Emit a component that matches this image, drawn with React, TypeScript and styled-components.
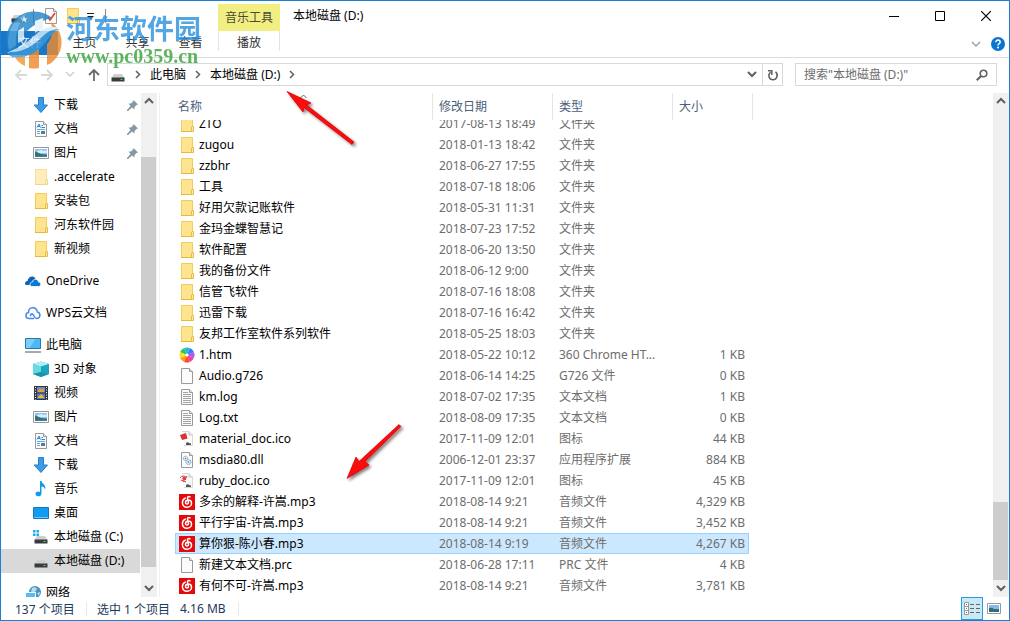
import React from "react";
import styled, { createGlobalStyle } from "styled-components";

const Global = createGlobalStyle`
  *, *::before, *::after { box-sizing: border-box; }
  html, body { margin: 0; padding: 0; background: #fff; }
  body, button, input, table {
    font-family: "Noto Sans", "Noto Sans CJK SC", sans-serif;
    font-size: 12px;
  }
  button { margin: 0; padding: 0; border: 0; background: none; color: inherit; }
  svg { display: block; flex: none; }
`;

/* ---------- layout ---------- */

const Window = styled.div`
  position: relative;
  display: flex;
  flex-direction: column;
  height: 100vh;
  border: 1px solid #1a80d2;
  background: #fff;
  color: #000;
  overflow: hidden;
`;

const Ribbon = styled.header`
  display: grid;
  grid-template-columns: 217px 62px 1fr auto;
  grid-template-rows: 30px 26px;
  flex: none;
  border-bottom: 1px solid #dadbdc;
`;

const QuickBar = styled.div`
  display: flex;
  align-items: center;
  padding-left: 9px;
`;

const QuickButton = styled.button<{ $w: number }>`
  display: flex;
  justify-content: center;
  width: ${(p) => p.$w}px;
`;

const Rule = styled.span<{ $color?: string; $h?: number }>`
  width: 1px;
  height: ${(p) => p.$h ?? 14}px;
  background: ${(p) => p.$color ?? "#8a8a8a"};
`;

const ToolLabel = styled.div`
  margin-top: 3px;
  background: #f1ee82;
  color: #4b4a2e;
  line-height: 27px;
  text-align: center;
`;

const WindowTitle = styled.h1`
  margin: 0;
  padding-left: 13px;
  font-size: 12px;
  font-weight: 400;
  line-height: 29px;
`;

const WindowButtons = styled.div`
  display: flex;
`;

const CaptionButton = styled.button`
  display: flex;
  align-items: center;
  justify-content: center;
  width: 46px;
`;

const Tabs = styled.nav`
  display: flex;
  align-items: flex-start;
`;

const Tab = styled.button<{ $file?: boolean }>`
  width: ${(p) => (p.$file ? 57 : 53)}px;
  height: 24px;
  background: ${(p) => (p.$file ? "#1a76c6" : "transparent")};
  color: ${(p) => (p.$file ? "#fff" : "#333")};
  line-height: 24px;
`;

const ToolTab = styled.button`
  height: 20px;
  border-left: 1px solid #e2e2e2;
  border-right: 1px solid #e2e2e2;
  color: #333;
  line-height: 24px;
`;

const RibbonEnd = styled.div`
  display: flex;
  grid-column: 4;
  align-items: center;
  justify-content: flex-end;
  gap: 10px;
  padding-right: 4px;
`;

const AddressRow = styled.div`
  display: flex;
  flex: none;
  align-items: flex-start;
  height: 35px;
  padding: 5px 12px 0 0;
`;

const HistoryButtons = styled.div`
  display: flex;
  align-items: center;
  justify-content: space-between;
  width: 106px;
  height: 23px;
  padding: 0 6px 0 13px;
`;

const AddressBox = styled.div`
  display: flex;
  flex: 1;
  align-items: center;
  height: 23px;
  padding-left: 2px;
  border: 1px solid #d9d9d9;
`;

const Crumb = styled.button`
  line-height: 21px;
  white-space: nowrap;
`;

const CrumbArrow = styled.span`
  display: flex;
  justify-content: center;
  width: 24px;
`;

const Spacer = styled.span`
  flex: 1;
`;

const BoxButton = styled.button<{ $ruled?: boolean }>`
  display: flex;
  align-items: center;
  justify-content: center;
  width: 20px;
  height: 21px;
  border-left: ${(p) => (p.$ruled ? "1px solid #d9d9d9" : "0")};
`;

const SearchBox = styled.label`
  display: flex;
  align-items: center;
  width: 202px;
  height: 23px;
  margin-left: 12px;
  padding: 0 8px;
  border: 1px solid #d9d9d9;
`;

const SearchInput = styled.input`
  flex: 1;
  min-width: 0;
  padding: 0;
  border: 0;
  outline: 0;
  background: transparent;
  &::placeholder { color: #6d6d6d; opacity: 1; }
`;

const Body = styled.div`
  display: flex;
  flex: 1;
  min-height: 0;
`;

const NavPane = styled.nav`
  width: 140px;
  flex: none;
  overflow: hidden;
`;

const NavList = styled.ul`
  margin: 0 1px 8px 0;
  padding: 0;
  list-style: none;
`;

const NavItem = styled.button<{ $root?: boolean; $on?: boolean }>`
  display: flex;
  align-items: center;
  gap: 5px;
  width: 100%;
  height: 24px;
  padding-left: ${(p) => (p.$root ? 24 : 32)}px;
  background: ${(p) => (p.$on ? "#d9d9d9" : "transparent")};
  line-height: 24px;
  text-align: left;
  white-space: nowrap;
`;

const PinSlot = styled.span`
  margin-left: auto;
  padding-right: 2px;
`;

const Scrollbar = styled.div<{ $before: number; $thumb: number; $after: number }>`
  display: grid;
  grid-template-rows:
    17px minmax(0, ${(p) => p.$before}fr) minmax(0, ${(p) => p.$thumb}fr)
    minmax(0, ${(p) => p.$after}fr) 17px;
  flex: none;
  width: 16px;
  background: #f0f0f0;
`;

const ScrollButton = styled.button`
  display: flex;
  align-items: center;
  justify-content: center;
  width: 15px;
`;

const Thumb = styled.div`
  grid-row: 3;
  width: 15px;
  background: #cdcdcd;
`;

const ScrollEnd = styled(ScrollButton)`
  grid-row: 5;
`;

const FilePane = styled.main`
  display: flex;
  flex: 1;
  min-width: 0;
  margin-left: 2px;
  padding-left: 15px;
  border-left: 1px solid #efefef;
`;

const FileTable = styled.table`
  display: flex;
  flex: 1;
  flex-direction: column;
  min-width: 0;
`;

const columns = "258px 120px 120px";

const Head = styled.thead`
  display: block;
  flex: none;
`;

const HeadRow = styled.tr`
  display: grid;
  grid-template-columns: ${columns} 80px;
`;

const HeadCell = styled.th<{ $first?: boolean }>`
  display: flex;
  position: relative;
  height: 27px;
  padding: 0 0 0 ${(p) => (p.$first ? 3 : 6)}px;
  border-right: 1px solid #e5e5e5;
  color: #4c607a;
  font-weight: 400;
  line-height: 27px;
`;

const SortMark = styled.span`
  position: absolute;
  top: 1px;
  left: 0;
  right: 0;
  display: flex;
  justify-content: center;
`;

const Rows = styled.tbody`
  display: block;
  flex: 1;
  min-height: 0;
  overflow: hidden;
`;

const Row = styled.tr<{ $on?: boolean }>`
  display: grid;
  grid-template-columns: ${columns} 76px;
  width: max-content;
  height: 21px;
  background: ${(p) => (p.$on ? "#cce8ff" : "transparent")};
  box-shadow: ${(p) => (p.$on ? "inset 0 0 0 1px #99d1ff" : "none")};
  line-height: 21px;
  &:first-child { margin-top: -7px; }
`;

const NameCell = styled.td`
  display: flex;
  align-items: center;
  gap: 4px;
  padding: 0 0 0 4px;
  white-space: nowrap;
`;

const InfoCell = styled.td<{ $right?: boolean }>`
  padding: ${(p) => (p.$right ? "0 4px 0 0" : "0 0 0 6px")};
  color: #6d6d6d;
  text-align: ${(p) => (p.$right ? "right" : "left")};
  white-space: nowrap;
`;

const StatusBar = styled.footer`
  display: flex;
  flex: none;
  align-items: center;
  height: 23px;
  padding: 0 4px 0 14px;
  color: #1e395b;
`;

const StatusText = styled.span<{ $w: number; $indent?: boolean }>`
  width: ${(p) => p.$w}px;
  padding-left: ${(p) => (p.$indent ? 10 : 0)}px;
  white-space: nowrap;
`;

const ViewButton = styled.button<{ $on?: boolean }>`
  display: flex;
  align-items: center;
  justify-content: center;
  width: 22px;
  height: 23px;
  border: ${(p) => (p.$on ? "1px solid #26a0da" : "0")};
  background: ${(p) => (p.$on ? "#cbe8f6" : "transparent")};
`;

/* ---------- overlays ---------- */

const Watermark = styled.div`
  position: absolute;
  top: 9px;
  left: 3px;
  display: flex;
  gap: 2px;
  opacity: 0.82;
  pointer-events: none;
`;

const WatermarkText = styled.div`
  display: flex;
  flex-direction: column;
  padding-top: 4px;
`;

const WatermarkName = styled.strong`
  color: #2f93de;
  font-size: 27px;
  font-weight: 700;
  line-height: 30px;
  white-space: nowrap;
`;

const WatermarkUrl = styled.strong`
  color: #3ca53c;
  font-family: "Liberation Serif", serif;
  font-size: 20px;
  font-weight: 700;
  line-height: 24px;
`;

const Arrows = styled.svg`
  position: absolute;
  top: -1px;
  left: -1px;
  pointer-events: none;
`;

/* ---------- icons ---------- */

const Chevron = ({ d, color = "#606060", w = 2 }: { d: "up" | "down" | "right"; color?: string; w?: number }) => {
  const path = { up: "M1 7l4-4 4 4", down: "M1 3l4 4 4-4", right: "M3 2l3.5 3.5L3 9" }[d];
  return (
    <svg width="10" height="11" viewBox="0 0 10 11" fill="none" stroke={color} strokeWidth={w}>
      <path d={path} />
    </svg>
  );
};

const FolderIcon = ({ pale }: { pale?: boolean }) => (
  <svg width="16" height="16" viewBox="0 0 16 16" opacity={pale ? 0.6 : 1}>
    <path d="M2.500 .5h11v10.500l-.5 4.500H2.500z" fill="#ffe48f" stroke="#f0cc58" />
    <path d="M2 15.500h12" stroke="#e5b93d" />
    <path d="M12.500 15.500v-4.500l.5-.5h1.500v5z" fill="#ffe9a2" stroke="#e8bd43" />
  </svg>
);

const Page = ({ children }: { children?: React.ReactNode }) => (
  <svg width="16" height="16" viewBox="0 0 16 16">
    <path d="M2.500 .5h8l3 3v12h-11z" fill="#fbfbfb" stroke="#9a9a9a" />
    <path d="M10.500 .5v3h3" fill="#e8e8e8" stroke="#9a9a9a" />
    {children}
  </svg>
);

const LinesIcon = () => (
  <Page>
    <path d="M4 3.500h5M4 5.500h8M4 7.500h8M4 9.500h8M4 11.500h8M4 13.500h8" stroke="#a3a3a3" />
  </Page>
);

const GearIcon = () => (
  <Page>
    <circle cx="6.500" cy="6.500" r="2.200" fill="#dceaf4" stroke="#8e9eab" strokeDasharray="1.500 .6" />
    <circle cx="9.500" cy="10" r="2.500" fill="#d2e7f5" stroke="#76a6c9" strokeDasharray="1.500 .6" />
    <circle cx="6.500" cy="6.500" r=".7" fill="#778" />
    <circle cx="9.500" cy="10" r=".8" fill="#4b88b8" />
  </Page>
);

const RedDocIcon = ({ ruby }: { ruby?: boolean }) => (
  <svg width="16" height="16" viewBox="0 0 16 16">
    <path d="M3 .5h7l3.500 3.500v10.500H5" fill="#fbfbfb" stroke="#d9d9d9" />
    <path d="M10 .5v3.500h3.500" fill="#eee" stroke="#c2c2c2" />
    <path d="M7 12l2-1 1 1 2 .5V14H7z" fill="#555" />
    {ruby ? (
      <g fill="none" stroke="#e0383c">
        <path d="M1 5q3-4 7 0M2 7l5 2M3 3l4 4M8 3L4 9" />
        <circle cx="5" cy="5.500" r="1.200" fill="#e0383c" />
      </g>
    ) : (
      <path d="M1 4l6-2 1.500 5.500L3 9z" fill="#dc3037" />
    )}
  </svg>
);

const WheelIcon = () => {
  const order = ["#a45cf2", "#3f78f2", "#22b8e0", "#2fc64e", "#f4e626", "#ff9d22", "#f94c34", "#f23f9c"];
  const start = [5, 6, 7, 0, 1, 2, 3, 4].map((n) => order[(n + 3) % 8]);
  const pt = (a: number) => `${8 + 7.5 * Math.cos(a)} ${8 + 7.5 * Math.sin(a)}`;
  return (
    <svg width="16" height="16" viewBox="0 0 16 16">
      {start.map((c, i) => {
        const a = (-i * Math.PI) / 4 - 0.4;
        return <path key={i} fill={c} d={`M8 8L${pt(a)}A7.500 7.500 0 0 1 ${pt(a + Math.PI / 4)}z`} />;
      })}
      <circle cx="8" cy="8" r="1.500" fill="#fff" />
    </svg>
  );
};

const MusicAppIcon = () => (
  <svg width="16" height="16" viewBox="0 0 16 16">
    <path d="M0 0h16v16H0z" fill="#e20a0a" />
    <path
      d="M11 2.900C9.800 2 8.300 2.600 8.500 4l.9 4c.3 1.300-.5 2-1.400 2s-1.600-.8-1.500-1.800C6.700 6.700 8 6 9.300 6c2 0 3.200 1.300 3.200 3.200 0 2.300-1.900 4-4.500 4-2.700 0-4.600-2-4.600-4.700 0-2 1.100-3.600 2.900-4.400"
      fill="none"
      stroke="#fff"
      strokeWidth="1.500"
      strokeLinecap="round"
    />
  </svg>
);

const DownIcon = () => (
  <svg width="16" height="16" viewBox="0 0 16 16">
    <path d="M5.500 .5h5V8h4L8 15.500 1 8h4.500z" fill="#3c9be8" stroke="#2a80ca" />
  </svg>
);

const DocIcon = () => (
  <Page>
    <path d="M4 6.500L6 3l1.500 3.500M5 5.500h2M8.500 4.500h1.500M8.500 6.500h3.500" stroke="#2887d0" fill="none" />
    <path d="M4 8.500h8M4 10.500h3M4 12.500h3" stroke="#64a7da" />
    <path d="M8 10h4v3H8z" fill="#4d7f98" />
  </Page>
);

const PictureIcon = () => (
  <svg width="16" height="16" viewBox="0 0 16 16">
    <path d="M.5 2.500h15v11H.5z" fill="#fff" stroke="#999" />
    <path d="M2 4h12v8H2z" fill="#8dc4f2" />
    <path d="M5 6q3-2 5 0 2-1 4 0v2H2z" fill="#d8effb" />
    <path d="M2 6.500q3 .5 6 2.500l6 .5V12H2z" fill="#38736d" />
    <path d="M2 11h12v1H2z" fill="#3d7eb8" />
  </svg>
);

const PinIcon = () => (
  <svg width="11" height="11" viewBox="0 0 11 11">
    <path d="M6.500 0L11 4.500l-1.500.5-2 2 0 2.500L5 7.500 1 11H0v-1l3.500-4L1.500 3.500 4 3.500l2-2z" fill="#8497a6" />
  </svg>
);

const OneDriveIcon = () => (
  <svg width="16" height="16" viewBox="0 0 16 16">
    <path d="M0 10.500C0 9 1 8 2.500 8 3 4 8 1.500 10.500 5.500L5 12H2C1 12 0 11.500 0 10.500z" fill="#0a63b5" />
    <path d="M5 11.500c0-1.500 1-2.500 2.500-2.500C8 5.500 12.500 5 13.500 9c3 0 3 4.500 0 4.500H7c-1.200 0-2-1-2-2z" fill="#0a78d6" stroke="#fff" strokeWidth=".8" />
  </svg>
);

const WpsIcon = () => (
  <svg width="16" height="16" viewBox="0 0 16 16" fill="none" stroke="#4c86ef" strokeWidth="1.500">
    <path d="M9 13.500H4C0 13.500 0 8 3.500 7.500 3.500 1.500 11.500 1 12.300 7c3.700.8 3.500 6.500-.8 6.500C9.500 13.500 9.500 11 8 9.500 6.500 8 4.500 10 6 11" />
  </svg>
);

const ComputerIcon = () => (
  <svg width="16" height="16" viewBox="0 0 16 16">
    <path d="M.5 1.500h15v10H.5z" fill="#4db8f6" stroke="#32779f" />
    <path d="M1 2h9L5 11H1z" fill="#7bcdfb" />
    <path d="M0 15h16" stroke="#7d929f" strokeWidth="1.500" />
  </svg>
);

const CubeIcon = () => (
  <svg width="16" height="16" viewBox="0 0 16 16">
    <path d="M0 3l8-2.500L16 3v10l-8 3-8-3z" fill="#2cb9cf" />
    <path d="M0 3l8-2.500L16 3l-8 2.500z" fill="#b4eef3" />
    <path d="M0 3l8 2.500V11L0 13z" fill="#69d8e3" />
    <path d="M8 5.500L16 3v10l-8-2z" fill="#19a6bf" />
    <path d="M0 13l8-2 8 2-8 3z" fill="#1794ad" />
  </svg>
);

const VideoIcon = () => (
  <svg width="16" height="16" viewBox="0 0 16 16">
    <path d="M1 1h14v14H1z" fill="#33353b" />
    <path d="M4 2h8v5.500H4z" fill="#6988cf" />
    <path d="M4 8.500h8V14H4z" fill="#4e79cf" />
    <path d="M5 6l2-3 2 2 2-2v4H5z" fill="#e2a52c" />
    <path d="M5 12l3-3 3 3v1H5z" fill="#e7b932" />
    <path d="M2.500 2v13M13.500 2v13" stroke="#fff" strokeDasharray="1 1.500" />
  </svg>
);

const MusicIcon = () => (
  <svg width="16" height="16" viewBox="0 0 16 16">
    <path d="M7 0h1.500c.5 3 5 3.500 3.500 8.500-.5-2-1.500-3-3.500-3V12.500C8.500 16.500 2 16 2.500 12.700 3 10.500 5.500 10 7 11z" fill="#119bea" />
  </svg>
);

const DesktopIcon = () => (
  <svg width="16" height="16" viewBox="0 0 16 16">
    <path d="M.5 2.500h15v11H.5z" fill="#109cf2" stroke="#1378b8" />
    <path d="M1 12.500h14" stroke="#6ec6fa" />
  </svg>
);

const DriveIcon = ({ win }: { win?: boolean }) => (
  <svg width="16" height="16" viewBox="0 0 16 16">
    {win && <path d="M0 1h2.500v2.500H0zM3.500 1H6v2.500H3.500zM0 4.500h2.500V7H0zM3.500 4.500H6V7H3.500z" fill="#1ba9f0" />}
    <path d="M4 7h8l2.500 4h-13z" fill="#cfcfcf" />
    <path d="M1.500 10.500h13v4h-13z" fill="#373b3e" />
    <path d="M10.500 12.500h2" stroke="#4fe04f" />
  </svg>
);

const NetworkIcon = () => (
  <svg width="16" height="16" viewBox="0 0 16 16">
    <circle cx="10" cy="7" r="6" fill="#4a93c2" />
    <path d="M7 3q4-2 5 1l-2 3-4 0zM12 8l3-1-1 4z" fill="#b6dbea" />
    <path d="M.5 7.500h10v6H.5z" fill="#55bdf5" stroke="#fff" />
    <path d="M2 15h8" stroke="#789" />
  </svg>
);

const DetailsIcon = () => (
  <svg width="16" height="14" viewBox="0 0 16 14">
    <path d="M.5 .5h4v4h-4zM.5 4.500h4v4h-4zM.5 8.500h4v4h-4z" fill="#fff" stroke="#999" />
    <path d="M6 2.500h4M12 2.500h4M6 6.500h4M12 6.500h4M6 10.500h4M12 10.500h4" stroke="#666" />
    <path d="M2 2h1v1H2z" fill="#566" />
    <path d="M2 6h1v1H2z" fill="#28a0e0" />
    <path d="M2 10h1v1H2z" fill="#d13c20" />
  </svg>
);

const NavArrow = ({ d, color }: { d: string; color: string }) => (
  <svg width="14" height="14" viewBox="0 0 14 14" fill="none" stroke={color} strokeWidth="1.800">
    <path d={d} />
  </svg>
);

const SiteLogo = () => (
  <svg width="60" height="59" viewBox="0 0 60 59">
    <path d="M9 48C-3 33 2 11 20 3.500 31-1 43 3 48 8 30 12 12 26 9 48z" fill="#2484c8" />
    <path d="M5 40C1 24 9 9 22 4c-7 9-11 19-10 31z" fill="#4ba3db" />
    <path d="M47 12c12 8 14 26 5 36-3 4-6 6-9 7V34c5-5 6-12 4-22z" fill="#ee8a30" />
    <path d="M9 43c5-1 8-3 12-5v18C16 54 11 49 9 43z" fill="#f29638" />
    <path d="M25 58V38l10-7v27q-5 1-10 0z" fill="#f08a2c" />
    <path d="M3 43c16 3 29-5 38-14 6-6 10-8 16-9-3-3-7-4-12-3-11 2-18 14-28 19-5 3-9 4-14 7z" fill="#d6edfb" />
    <path d="M5 42c14 1 25-7 33-15 6-6 11-8 17-8-7 4-10 9-14 14-9 11-22 17-35 13z" fill="#3b9ad8" />
    <path d="M14 33V21l6-4v13zM31 23V11l8-3v10z" fill="#e3f2fc" />
    <path d="M20 6l1 2.500h2.500L21.500 10l1 2.500-2.500-1.500-2.500 1.500 1-2.500-2-1.500H19z" fill="#f2faff" />
  </svg>
);

/* ---------- data ---------- */

type NavEntry = [string, React.ReactNode];

const quickAccess: NavEntry[] = [
  ["下载", <DownIcon />],
  ["文档", <DocIcon />],
  ["图片", <PictureIcon />],
  [".accelerate", <FolderIcon pale />],
  ["安装包", <FolderIcon />],
  ["河东软件园", <FolderIcon />],
  ["新视频", <FolderIcon />],
];

const thisPc: NavEntry[] = [
  ["3D 对象", <CubeIcon />],
  ["视频", <VideoIcon />],
  ["图片", <PictureIcon />],
  ["文档", <DocIcon />],
  ["下载", <DownIcon />],
  ["音乐", <MusicIcon />],
  ["桌面", <DesktopIcon />],
  ["本地磁盘 (C:)", <DriveIcon win />],
  ["本地磁盘 (D:)", <DriveIcon />],
];

const icons = {
  folder: <FolderIcon />,
  web: <WheelIcon />,
  blank: <Page />,
  text: <LinesIcon />,
  material: <RedDocIcon />,
  dll: <GearIcon />,
  ruby: <RedDocIcon ruby />,
  mp3: <MusicAppIcon />,
};

const files: [keyof typeof icons, string, string, string, string][] = [
  ["folder", "ZTO", "2017-08-13 18:49", "文件夹", ""],
  ["folder", "zugou", "2018-01-13 18:42", "文件夹", ""],
  ["folder", "zzbhr", "2018-06-27 17:55", "文件夹", ""],
  ["folder", "工具", "2018-07-18 18:06", "文件夹", ""],
  ["folder", "好用欠款记账软件", "2018-05-31 11:31", "文件夹", ""],
  ["folder", "金玛金蝶智慧记", "2018-07-23 17:52", "文件夹", ""],
  ["folder", "软件配置", "2018-06-20 13:50", "文件夹", ""],
  ["folder", "我的备份文件", "2018-06-12 9:00", "文件夹", ""],
  ["folder", "信管飞软件", "2018-07-16 18:08", "文件夹", ""],
  ["folder", "迅雷下载", "2018-07-16 16:42", "文件夹", ""],
  ["folder", "友邦工作室软件系列软件", "2018-05-25 18:03", "文件夹", ""],
  ["web", "1.htm", "2018-05-22 10:12", "360 Chrome HT...", "1 KB"],
  ["blank", "Audio.g726", "2018-06-14 14:25", "G726 文件", "0 KB"],
  ["text", "km.log", "2018-07-02 17:35", "文本文档", "1 KB"],
  ["text", "Log.txt", "2018-08-09 17:35", "文本文档", "0 KB"],
  ["material", "material_doc.ico", "2017-11-09 12:01", "图标", "44 KB"],
  ["dll", "msdia80.dll", "2006-12-01 23:37", "应用程序扩展", "884 KB"],
  ["ruby", "ruby_doc.ico", "2017-11-09 12:01", "图标", "45 KB"],
  ["mp3", "多余的解释-许嵩.mp3", "2018-08-14 9:21", "音频文件", "4,329 KB"],
  ["mp3", "平行宇宙-许嵩.mp3", "2018-08-14 9:21", "音频文件", "3,452 KB"],
  ["mp3", "算你狠-陈小春.mp3", "2018-08-14 9:19", "音频文件", "4,267 KB"],
  ["blank", "新建文本文档.prc", "2018-06-28 17:11", "PRC 文件", "4 KB"],
  ["mp3", "有何不可-许嵩.mp3", "2018-08-14 9:21", "音频文件", "3,781 KB"],
];

const selectedFile = "算你狠-陈小春.mp3";

/* ---------- page ---------- */

export default function App() {
  return (
    <>
      <Global />
      <Window>
        <Ribbon>
          <QuickBar>
            <QuickButton $w={16} aria-label="驱动器"><DriveIcon /></QuickButton>
            <QuickButton $w={14} aria-hidden><Rule /></QuickButton>
            <QuickButton $w={22} aria-label="属性">
              <Page><path d="M5 9l2 3L12 5" fill="none" stroke="#e34a22" strokeWidth="1.800" /></Page>
            </QuickButton>
            <QuickButton $w={22} aria-label="新建文件夹"><FolderIcon /></QuickButton>
            <QuickButton $w={14} aria-label="自定义快速访问工具栏">
              <svg width="8" height="7" viewBox="0 0 8 7"><path d="M0 0h7v1H0zM0 3h7L3.500 6.500z" fill="#222" /></svg>
            </QuickButton>
            <QuickButton $w={14} aria-hidden><Rule /></QuickButton>
          </QuickBar>
          <ToolLabel>音乐工具</ToolLabel>
          <WindowTitle>本地磁盘 (D:)</WindowTitle>
          <WindowButtons>
            <CaptionButton aria-label="最小化">
              <svg width="10" height="10"><path d="M0 5.500h10" stroke="#000" /></svg>
            </CaptionButton>
            <CaptionButton aria-label="最大化">
              <svg width="10" height="10"><path d="M.5 .5h9v9h-9z" fill="none" stroke="#000" /></svg>
            </CaptionButton>
            <CaptionButton aria-label="关闭">
              <svg width="10" height="10"><path d="M0 0l10 10M10 0L0 10" stroke="#000" strokeWidth="1.200" /></svg>
            </CaptionButton>
          </WindowButtons>
          <Tabs>
            <Tab $file>文件</Tab>
            <Tab>主页</Tab>
            <Tab>共享</Tab>
            <Tab>查看</Tab>
          </Tabs>
          <ToolTab>播放</ToolTab>
          <RibbonEnd>
            <button aria-label="展开功能区"><Chevron d="down" color="#a0a0a0" w={1.5} /></button>
            <button aria-label="帮助">
              <svg width="14" height="14" viewBox="0 0 14 14">
                <circle cx="7" cy="7" r="7" fill="#0a74d1" />
                <path d="M4.800 5.200c0-3 4.600-2.600 4.400 0C9.100 6.500 7 6.700 7 8.500" fill="none" stroke="#fff" strokeWidth="1.500" />
                <circle cx="7" cy="10.600" r="1" fill="#fff" />
              </svg>
            </button>
          </RibbonEnd>
        </Ribbon>

        <AddressRow>
          <HistoryButtons>
            <button aria-label="后退"><NavArrow d="M13 7H2M7 2L2 7l5 5" color="#d8d8d8" /></button>
            <button aria-label="前进"><NavArrow d="M1 7h11M7 2l5 5-5 5" color="#d8d8d8" /></button>
            <button aria-label="最近位置"><Chevron d="down" color="#d0d0d0" w={1.5} /></button>
            <button aria-label="上移"><NavArrow d="M7 13V2M2 7l5-5 5 5" color="#6a6a6a" /></button>
          </HistoryButtons>
          <AddressBox>
            <DriveIcon />
            <CrumbArrow><Chevron d="right" w={1.5} /></CrumbArrow>
            <Crumb>此电脑</Crumb>
            <CrumbArrow><Chevron d="right" w={1.5} /></CrumbArrow>
            <Crumb>本地磁盘 (D:)</Crumb>
            <CrumbArrow><Chevron d="right" w={1.5} /></CrumbArrow>
            <Spacer />
            <BoxButton aria-label="以前的位置"><Chevron d="down" /></BoxButton>
            <BoxButton $ruled aria-label="刷新">
              <svg width="12" height="12" viewBox="0 0 12 12" fill="none" stroke="#606060" strokeWidth="1.500">
                <path d="M8.500 2.800C12 6 9.500 10.800 6 10.800 2 10.800 .5 6 3.500 3.200" />
                <path d="M1 1.800h3.800V6" />
              </svg>
            </BoxButton>
          </AddressBox>
          <SearchBox>
            <SearchInput aria-label="搜索" placeholder={'搜索"本地磁盘 (D:)"'} />
            <svg width="12" height="12" viewBox="0 0 12 12" fill="none" stroke="#606060" strokeWidth="1.600">
              <circle cx="7.500" cy="4.500" r="3.300" />
              <path d="M5 7L.8 11.200" strokeWidth="2" />
            </svg>
          </SearchBox>
        </AddressRow>

        <Body>
          <NavPane>
            <NavList>
              {quickAccess.map(([label, icon], i) => (
                <li key={label}>
                  <NavItem>
                    {icon}
                    {label}
                    {i < 3 && <PinSlot><PinIcon /></PinSlot>}
                  </NavItem>
                </li>
              ))}
            </NavList>
            <NavList><li><NavItem $root><OneDriveIcon />OneDrive</NavItem></li></NavList>
            <NavList><li><NavItem $root><WpsIcon />WPS云文档</NavItem></li></NavList>
            <NavList>
              <li><NavItem $root><ComputerIcon />此电脑</NavItem></li>
              {thisPc.map(([label, icon]) => (
                <li key={label}>
                  <NavItem $on={label === "本地磁盘 (D:)"}>{icon}{label}</NavItem>
                </li>
              ))}
            </NavList>
            <NavList><li><NavItem $root><NetworkIcon />网络</NavItem></li></NavList>
          </NavPane>
          <Scrollbar $before={47} $thumb={410} $after={13}>
            <ScrollButton aria-label="向上滚动"><Chevron d="up" /></ScrollButton>
            <Thumb />
            <ScrollEnd aria-label="向下滚动"><Chevron d="down" /></ScrollEnd>
          </Scrollbar>
          <FilePane>
            <FileTable>
              <Head>
                <HeadRow>
                  <HeadCell $first>
                    名称
                    <SortMark>
                      <svg width="7" height="5" viewBox="0 0 7 5" fill="none" stroke="#666"><path d="M.5 4l3-3 3 3" /></svg>
                    </SortMark>
                  </HeadCell>
                  <HeadCell>修改日期</HeadCell>
                  <HeadCell>类型</HeadCell>
                  <HeadCell>大小</HeadCell>
                </HeadRow>
              </Head>
              <Rows>
                {files.map(([icon, name, date, type, size]) => (
                  <Row key={name} $on={name === selectedFile}>
                    <NameCell>{icons[icon]}{name}</NameCell>
                    <InfoCell>{date}</InfoCell>
                    <InfoCell>{type}</InfoCell>
                    <InfoCell $right>{size}</InfoCell>
                  </Row>
                ))}
              </Rows>
            </FileTable>
            <Scrollbar $before={392} $thumb={78} $after={0}>
              <ScrollButton aria-label="向上滚动"><Chevron d="up" /></ScrollButton>
              <Thumb />
              <ScrollEnd aria-label="向下滚动"><Chevron d="down" /></ScrollEnd>
            </Scrollbar>
          </FilePane>
        </Body>

        <StatusBar>
          <StatusText $w={71}>137 个项目</StatusText>
          <Rule $color="#e8e8e8" />
          <StatusText $w={93} $indent>选中 1 个项目</StatusText>
          <StatusText $w={58}>4.16 MB</StatusText>
          <Rule $color="#e8e8e8" />
          <Spacer />
          <ViewButton $on aria-label="详细信息"><DetailsIcon /></ViewButton>
          <ViewButton aria-label="大图标">
            <svg width="14" height="11" viewBox="0 0 14 11">
              <path d="M.5 .5h13v10H.5z" fill="#fff" stroke="#999" />
              <path d="M2 2h10v7H2z" fill="#83bbea" />
              <path d="M2 5q3-1 5 1l5 0v3H2z" fill="#316c77" />
            </svg>
          </ViewButton>
        </StatusBar>

        <Watermark>
          <SiteLogo />
          <WatermarkText>
            <WatermarkName>河东软件园</WatermarkName>
            <WatermarkUrl>www.pc0359.cn</WatermarkUrl>
          </WatermarkText>
        </Watermark>

        <Arrows width="420" height="500" viewBox="0 0 420 500" aria-hidden>
          <defs>
            <filter id="shade" x="-20%" y="-20%" width="150%" height="150%">
              <feDropShadow dx="2" dy="2" stdDeviation="1.500" floodOpacity=".5" />
            </filter>
          </defs>
          <g filter="url(#shade)" fill="#fb0a0a" stroke="#d40000" strokeWidth=".7">
            <path d="M287 91.500L311 103l-4.500 2L354 142l-2 2.500-48-37-1 4.500z" />
            <path d="M347 478.500L356 457l3 4.500 40-37 2 2-36 35 4 3.500z" />
          </g>
        </Arrows>
      </Window>
    </>
  );
}
